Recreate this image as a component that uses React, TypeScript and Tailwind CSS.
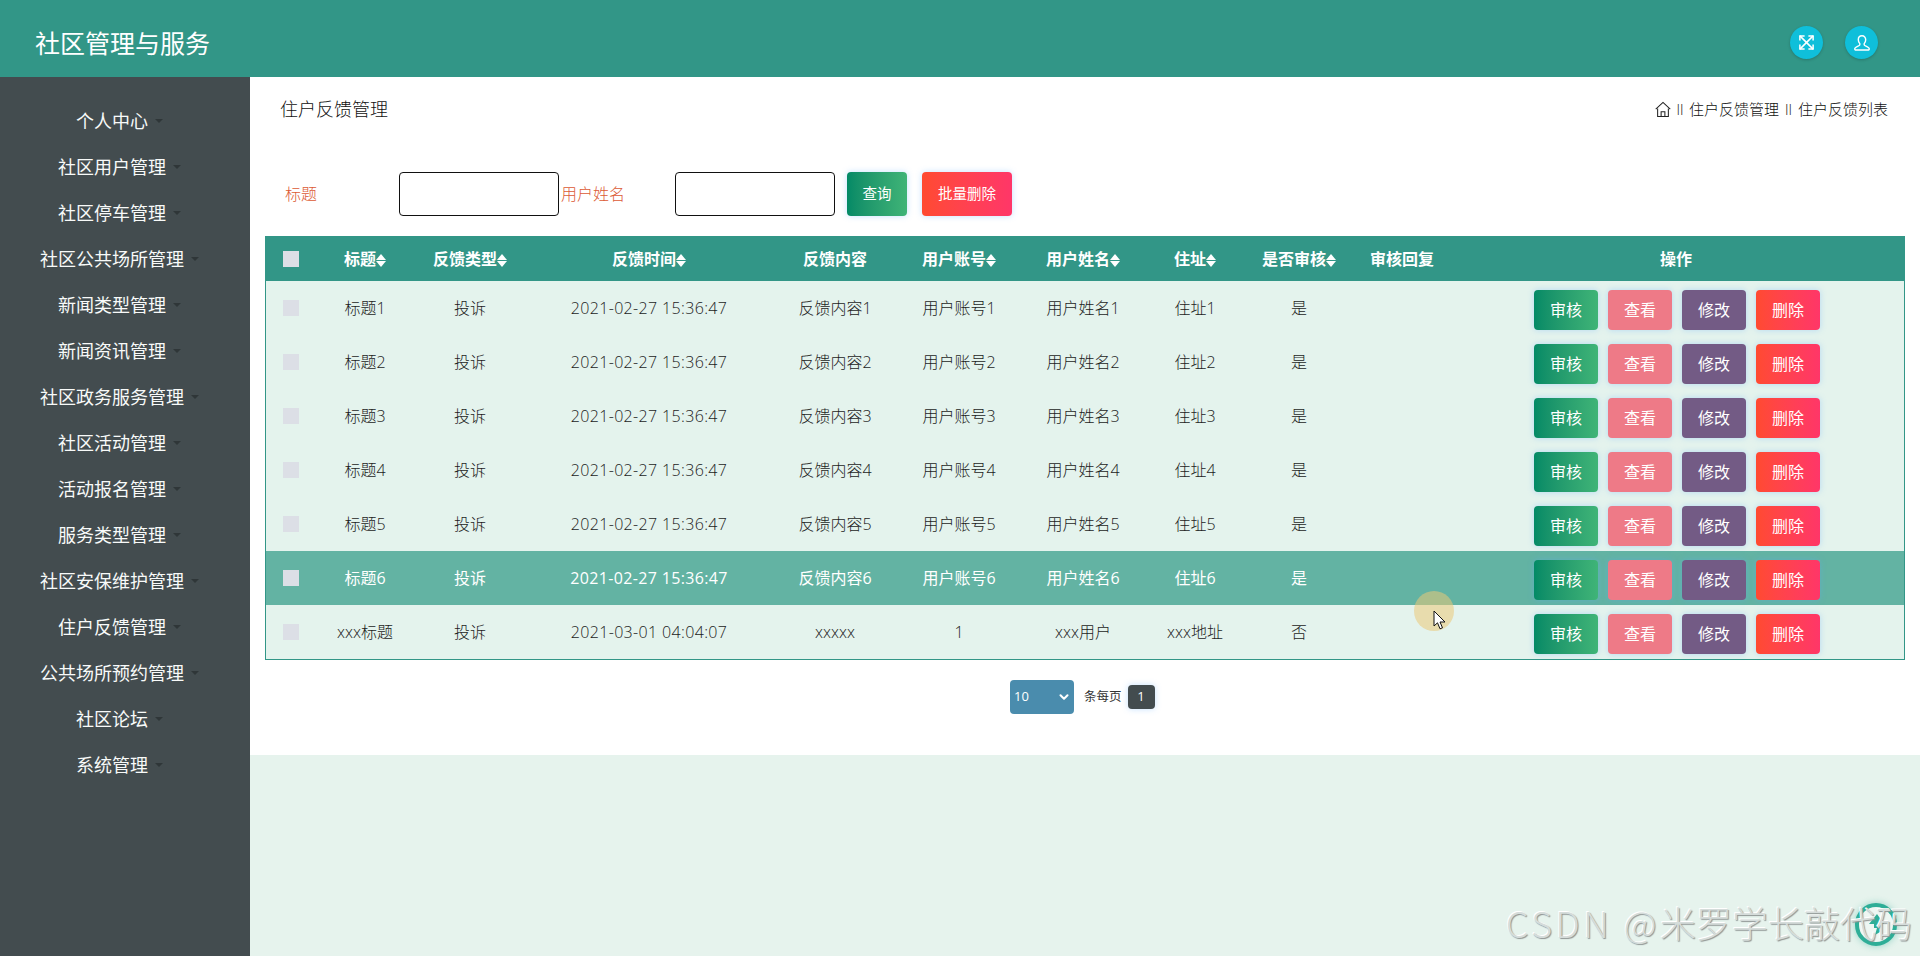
import { ChevronDown } from "lucide-react"

const menus = ['个人中心', '社区用户管理', '社区停车管理', '社区公共场所管理', '新闻类型管理', '新闻资讯管理', '社区政务服务管理', '社区活动管理', '活动报名管理', '服务类型管理', '社区安保维护管理', '住户反馈管理', '公共场所预约管理', '社区论坛', '系统管理']

const cols = [
    { label: '标题', sort: true, width: 'w-[94px]' },
    { label: '反馈类型', sort: true, width: 'w-[116px]' },
    { label: '反馈时间', sort: true, width: 'w-[242px]' },
    { label: '反馈内容', sort: false, width: 'w-[130px]' },
    { label: '用户账号', sort: true, width: 'w-[118px]' },
    { label: '用户姓名', sort: true, width: 'w-[130px]' },
    { label: '住址', sort: true, width: 'w-[94px]' },
    { label: '是否审核', sort: true, width: 'w-[114px]' },
    { label: '审核回复', sort: false, width: 'w-[92px]' },
]

const rows = [1, 2, 3, 4, 5, 6].map((n) => [`标题${n}`, '投诉', '2021-02-27 15:36:47', `反馈内容${n}`, `用户账号${n}`, `用户姓名${n}`, `住址${n}`, '是', ''])
rows.push(['xxx标题', '投诉', '2021-03-01 04:04:07', 'xxxxx', '1', 'xxx用户', 'xxx地址', '否', ''])

const glow = 'shadow-[0_0_6px_rgba(90,170,255,0.35)]'

function SortIcon() {
    return (
        <span className="inline-flex flex-col gap-[1px] align-middle">
            <span className="block w-0 h-0 border-x-[5px] border-x-transparent border-b-[6px] border-b-white"></span>
            <span className="block w-0 h-0 border-x-[5px] border-x-transparent border-t-[6px] border-t-white"></span>
        </span>
    )
}

function RowButtons() {
    return (
        <div className="flex justify-center gap-[10px] pt-[4px] pl-[2px]">
            <button className={`w-[64px] h-[40px] rounded-[4px] font-normal text-white text-[16px] bg-gradient-to-r from-[#038a66] to-[#3fb477] ${glow}`}>审核</button>
            <button className={`w-[64px] h-[40px] rounded-[4px] font-normal text-white text-[16px] bg-[#ee7a87] ${glow}`}>查看</button>
            <button className={`w-[64px] h-[40px] rounded-[4px] font-normal text-white text-[16px] bg-[#735b85] ${glow}`}>修改</button>
            <button className={`w-[64px] h-[40px] rounded-[4px] font-normal text-white text-[16px] bg-gradient-to-r from-[#ff4a30] to-[#ff3668] ${glow}`}>删除</button>
        </div>
    )
}

export default function App() {
    return (
        <div className="relative h-[956px] overflow-hidden flex flex-col bg-[#e6f3ed] font-['Open_Sans','Noto_Sans_CJK_SC',sans-serif] font-light text-[#222]">
            <header className="h-[77px] shrink-0 bg-[#329687] flex items-center justify-between pl-[35px] pr-[42px] pt-[8px]">
                <div className="text-[25px] font-normal text-white pt-[2px]">社区管理与服务</div>
                <div className="flex gap-[22px]">
                    <div className="w-[33px] h-[33px] rounded-full bg-[#0fbfda] shadow-[0_1px_3px_rgba(0,0,0,0.2)] flex items-center justify-center text-white">
                        <svg width="17" height="17" viewBox="0 0 18 18" fill="none" stroke="currentColor" strokeWidth="1.6">
                            <path d="M2 2l14 14M16 2 2 16" />
                            <path d="M2 7V2h5M11 2h5v5M16 11v5h-5M7 16H2v-5" />
                        </svg>
                    </div>
                    <div className="w-[33px] h-[33px] rounded-full bg-[#0fbfda] shadow-[0_1px_3px_rgba(0,0,0,0.2)] flex items-center justify-center text-white">
                        <svg width="18" height="18" viewBox="0 0 18 18" fill="none" stroke="currentColor" strokeWidth="1.4">
                            <path d="M9 1.8c-2.3 0-3.7 1.700-3.700 3.900 0 1.700.7 3 1.500 3.900v1.500c0 .6-3.800 1.700-4.800 3-.4.5-.3 1.900.3 1.900h13.400c.6 0 .7-1.400.3-1.900-1-1.300-4.800-2.400-4.800-3V9.600c.8-.9 1.500-2.200 1.500-3.900 0-2.200-1.400-3.900-3.700-3.900z" />
                        </svg>
                    </div>
                </div>
            </header>

            <div className="flex flex-1 min-h-0">
                <aside className="w-[250px] shrink-0 bg-[#434c4f] pt-[21px]">
                    {menus.map((m) => (
                        <div key={m} className="h-[46px] flex items-center justify-center text-[18px] font-normal text-[#f8faf9]">
                            {m}
                            <span className="ml-[7px] mr-[11px] w-0 h-0 border-x-[4px] border-x-transparent border-t-[4px] border-t-[#2f3638]"></span>
                        </div>
                    ))}
                </aside>

                <main className="flex-1 min-w-0">
                    <div className="h-[678px] bg-white">
                        <div className="h-[66px] flex items-center justify-between pl-[30px] pr-[32px] pb-[2px]">
                            <div className="text-[18px] text-[#111]">住户反馈管理</div>
                            <div className="flex items-center text-[15px] text-[#111]">
                                <svg width="16" height="17" viewBox="0 0 17 17" fill="none" stroke="#222" strokeWidth="1.1">
                                    <path d="M.8 8.200 8.500 1l7.700 7.200" />
                                    <path d="M2.800 7.500V16h11.400V7.500" />
                                    <path d="M6.500 16v-5h4v5" />
                                </svg>
                                <span className="w-[18px] text-center text-[14px]">II</span>
                                <span>住户反馈管理</span>
                                <span className="w-[19px] text-center text-[14px]">II</span>
                                <span>住户反馈列表</span>
                            </div>
                        </div>

                        <div className="flex items-center pl-[35px] pt-[29px] h-[73px]">
                            <label className="w-[114px] text-[16px] text-[#dc5a34]">标题</label>
                            <input className="w-[160px] h-[44px] border border-[#111] rounded-[4px]" />
                            <label className="w-[114px] ml-[2px] text-[16px] text-[#dc5a34]">用户姓名</label>
                            <input className="w-[160px] h-[44px] border border-[#111] rounded-[4px]" />
                            <button className={`ml-[12px] w-[60px] h-[44px] rounded-[4px] font-normal text-white text-[14.500px] bg-gradient-to-r from-[#038a66] to-[#3fb477] ${glow}`}>查询</button>
                            <button className={`ml-[15px] w-[90px] h-[44px] rounded-[4px] font-normal text-white text-[14.500px] bg-gradient-to-r from-[#ff4a30] to-[#ff3668] ${glow}`}>批量删除</button>
                        </div>

                        <div className="ml-[15px] mt-[20px] w-[1640px] border-x border-b border-[#329687]">
                            <table className="w-full table-fixed text-center text-[16px]">
                                <colgroup>
                                    <col className="w-[52px]" />
                                    {cols.map((c) => <col key={c.label} className={c.width} />)}
                                    <col className="w-[456px]" />
                                </colgroup>
                                <thead>
                                    <tr className="h-[45px] bg-[#329687] text-white">
                                        <th><span className="block w-[16px] h-[16px] ml-[17px] bg-[#dcdfe6]"></span></th>
                                        {cols.map((c) => (
                                            <th key={c.label} className="font-bold">{c.label}{c.sort && <SortIcon />}</th>
                                        ))}
                                        <th className="font-bold">操作</th>
                                    </tr>
                                </thead>
                                <tbody>
                                    {rows.map((row, i) => (
                                        <tr key={i} className={i === 5 ? 'h-[54px] bg-[#63b3a3] text-white font-normal' : 'h-[54px] bg-[#e4f3ed] text-[#1c1c1c]'}>
                                            <td><span className="block w-[16px] h-[16px] ml-[17px] bg-[#dcdfe6]"></span></td>
                                            {row.map((cell, j) => <td key={j} className={j === 2 ? 'tracking-[0.35px]' : ''}>{cell}</td>)}
                                            <td><RowButtons /></td>
                                        </tr>
                                    ))}
                                </tbody>
                            </table>
                        </div>

                        <div className="flex items-center pl-[760px] mt-[20px]">
                            <div className="relative w-[64px] h-[34px]">
                                <select className="w-full h-full appearance-none rounded-[4px] bg-[#4a8cad] font-normal text-white text-[13px] pl-[4px]">
                                    <option>10</option>
                                </select>
                                <ChevronDown size={14} strokeWidth={3.500} className="absolute right-[3px] top-[10px] text-white" />
                            </div>
                            <span className="ml-[10px] text-[12.500px] font-normal text-[#333]">条每页</span>
                            <span className={`ml-[6px] w-[27px] h-[24px] rounded-[4px] bg-[#434c4f] font-normal text-white text-[13px] flex items-center justify-center ${glow}`}>1</span>
                        </div>
                    </div>
                </main>
            </div>

            {/* mouse highlight */}
            <div className="absolute left-[1414px] top-[591px] w-[40px] h-[40px] rounded-full bg-[rgba(235,200,120,0.55)]"></div>
            <svg className="absolute left-[1433px] top-[610px]" width="14" height="20" viewBox="0 0 14 20" fill="#fff" stroke="#111" strokeWidth="1">
                <path d="M1 1v15l3.500-3.200 2.500 6 2.500-1-2.500-5.800h5z" />
            </svg>

            {/* bottom right widget, watermark sits on top of it */}
            <div className="absolute left-[1855px] top-[903px] w-[42px] h-[43px] rounded-full border-[4px] border-[#2eae97] bg-[#eef7f3] shadow-[0_0_7px_rgba(46,174,151,0.45)] flex items-center justify-center">
                <svg width="18" height="24" viewBox="0 0 18 24" fill="#2eae97">
                    <path d="M10 1 2 11h5v4h3l-2 7 5-3v-8h4z" />
                </svg>
            </div>
            <div className="absolute right-[8px] top-[898px] font-['Noto_Sans_CJK_SC',sans-serif] text-[36px] leading-[48px] whitespace-nowrap text-[#d5dcda] [text-shadow:1px_1px_1px_#8f9594,-1px_-1px_0_#fff]"><span className="tracking-[3.500px]">CSDN @</span>米罗学长敲代码</div>
        </div>
    )
}
